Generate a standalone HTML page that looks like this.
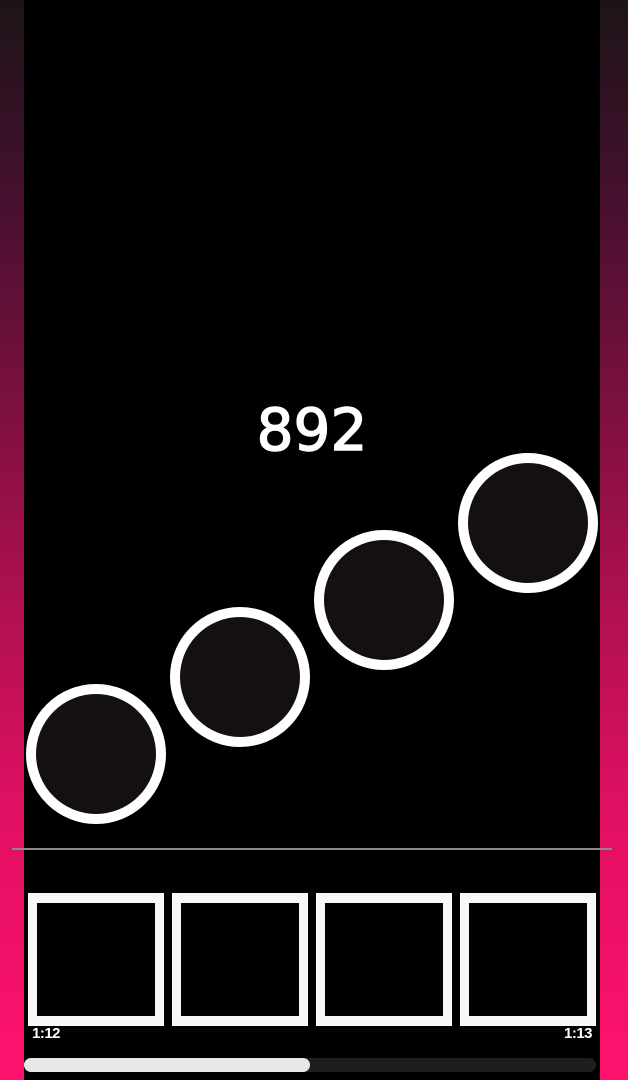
<!DOCTYPE html>
<html><head><style>
html,body{margin:0;padding:0;width:628px;height:1080px;overflow:hidden;background:#000}
.side{position:absolute;top:0;height:1080px;width:24px;background:linear-gradient(#1c1418 0%,#4a1030 20%,#a0104a 50%,#e01062 75%,#ff1270 100%)}
.c{position:absolute;width:120px;height:120px;border:10px solid #fff;border-radius:50%;background:#151010}
.b{position:absolute;top:893px;width:118px;height:113px;border:9px solid #f8f8f8;border-top-width:10px;border-bottom-width:10px;background:#000}
.t{position:absolute;top:1025px;color:#fff;font:bold 15px "Liberation Sans",sans-serif;letter-spacing:-0.5px}
</style></head><body>
<div class="side" style="left:0"></div>
<div class="side" style="left:600px;width:28px"></div>
<div style="position:absolute;left:247px;top:401px;width:130px;text-align:center;color:#fff;font:58px/1 'DejaVu Sans',sans-serif;-webkit-text-stroke:1.5px #fff;letter-spacing:0px">892</div>
<div class="c" style="left:26px;top:684px"></div>
<div class="c" style="left:170px;top:607px"></div>
<div class="c" style="left:314px;top:530px"></div>
<div class="c" style="left:458px;top:453px"></div>
<div style="position:absolute;left:12px;top:848px;width:600px;height:2px;background:#8a8a8a"></div>
<div class="b" style="left:28px"></div>
<div class="b" style="left:172px"></div>
<div class="b" style="left:316px"></div>
<div class="b" style="left:460px"></div>
<div class="t" style="left:32px">1:12</div>
<div class="t" style="left:564px">1:13</div>
<div style="position:absolute;left:24px;top:1058px;width:572px;height:14px;border-radius:7px;background:#1e1e1e"></div>
<div style="position:absolute;left:24px;top:1058px;width:286px;height:14px;border-radius:7px;background:#e8e8e8"></div>
</body></html>
